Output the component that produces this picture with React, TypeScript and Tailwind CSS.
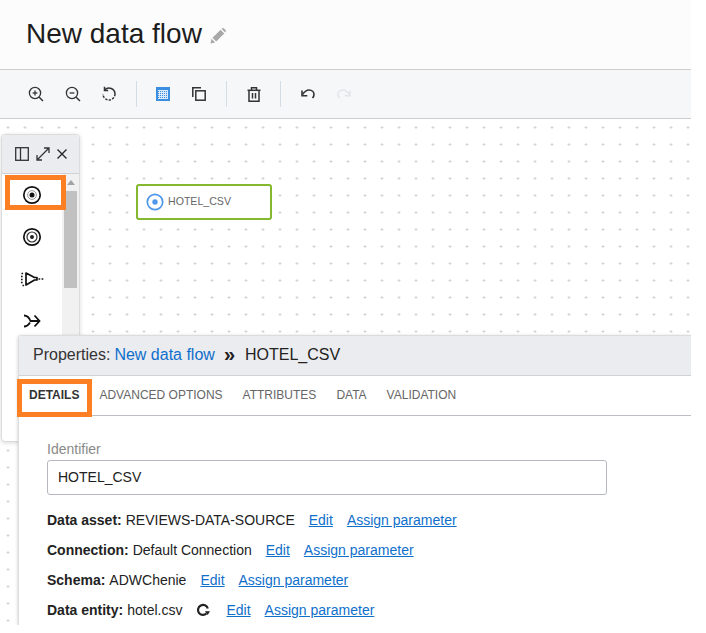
import React from "react";

const font = "font-['Liberation_Sans',Arial,sans-serif]";

const Sep = () => <div className="w-px h-[26px] bg-[#d3dde6] mx-[9px]" />;

const ToolBtn = ({ children }: { children: React.ReactNode }) => (
	<div className="w-9 h-9 flex items-center justify-center">{children}</div>
);

const ZoomIcon = ({ plus }: { plus?: boolean }) => (
	<svg width="16" height="16" viewBox="0 0 16 16" fill="none" stroke="#333" strokeWidth="1.3">
		<circle cx="7" cy="7" r="5.6" />
		<path d="M11.2 11.2L15 15" strokeWidth="1.5" />
		<path d="M4.6 7h4.8" />
		{plus && <path d="M7 4.6v4.8" />}
	</svg>
);

const SourceIcon = () => (
	<svg width="20" height="20" viewBox="0 0 20 20" fill="none">
		<circle cx="10" cy="10" r="8.2" stroke="#111" strokeWidth="1.7" />
		<circle cx="10" cy="10" r="4.4" stroke="#999" strokeWidth="1" />
		<circle cx="10" cy="10" r="2.5" fill="#111" />
	</svg>
);

const TargetIcon = () => (
	<svg width="20" height="20" viewBox="0 0 20 20" fill="none">
		<circle cx="10" cy="10" r="8.2" stroke="#111" strokeWidth="1.7" />
		<circle cx="10" cy="10" r="5" stroke="#333" strokeWidth="1.2" />
		<circle cx="10" cy="10" r="2" fill="#222" />
	</svg>
);

const FilterIcon = () => (
	<svg width="24" height="16" viewBox="0 0 24 16" fill="none" stroke="#111">
		<path d="M6 2l8.500 4.500h2.500v2.500h-2.500L6 14z" strokeWidth="1.700" strokeLinejoin="round" />
		<path d="M1.500 2.500h2M1 5.500h2M1 8.500h2M1 11.500h2M2.500 14.500h2" strokeWidth="1.600" strokeDasharray="1.600 0.800" />
		<path d="M18.500 8h5" strokeWidth="1.700" strokeDasharray="1.700 1.400" />
	</svg>
);

const JoinIcon = () => (
	<svg width="18" height="14" viewBox="0 0 18 14" fill="none" stroke="#111" strokeWidth="1.800">
		<path d="M1 1.500c3 0 5 1.500 6.500 5.500H16" />
		<path d="M1 12.500c2.500 0 4.500-1.500 6-4" />
		<path d="M11.500 1.500L16.500 7l-5 5.500" />
	</svg>
);

const Row = ({ label, value, refresh }: { label: string; value: string; refresh?: boolean }) => (
	<div className="h-[30px] flex items-center text-sm text-[#222]">
		<span className="font-bold mr-1">{label}</span>
		<span>{value}</span>
		{refresh && (
			<svg className="ml-[14px] mr-[2px]" width="14" height="14" viewBox="0 0 14 14" fill="none">
				<path d="M11.800 5.500A5 5 0 1 0 10.500 10.500" stroke="#222" strokeWidth="2.200" />
				<path d="M8.800 8.300h5.200l-2.300 3.700z" fill="#222" />
			</svg>
		)}
		<a className="ml-[14px] text-[#0f6fcb] underline">Edit</a>
		<a className="ml-[14px] text-[#0f6fcb] underline">Assign parameter</a>
	</div>
);

export default function App() {
	return (
		<div className={`${font} w-[706px] h-[633px] bg-white overflow-hidden`}>
			<div className="w-[691px] h-[625px] flex flex-col overflow-hidden">
				<header className="h-[70px] shrink-0 bg-[#fcfcfc] border-b border-[#cdcdcd] flex items-center pl-[26px] pb-[2px]">
					<h1 className="text-[28px] text-[#1d1d1d] leading-none">New data flow</h1>
					<svg className="ml-[8px] mt-[4px]" width="16" height="16" viewBox="0 0 16 16" fill="#a9a9a9">
						<path d="M0.500 15.500l1-4.700 3.700 3.700zM2.500 9.800L10.600 1.700l3.700 3.700-8.100 8.100zM11.500 0.800l1-0.600c0.500-0.300 1-0.200 1.400 0.200l1.700 1.700c0.400 0.400 0.400 1 0 1.400l-0.500 1z" />
					</svg>
				</header>

				<div className="h-[49px] shrink-0 bg-[#f6f7f9] border-b border-[#cdcdcd] flex items-center pl-[18px]">
					<ToolBtn>
						<ZoomIcon plus />
					</ToolBtn>
					<div className="ml-px">
						<ToolBtn>
							<ZoomIcon />
						</ToolBtn>
					</div>
					<ToolBtn>
						<svg width="16" height="16" viewBox="0 0 16 16" fill="none" stroke="#333" strokeWidth="1.500">
							<path d="M3.800 3.800A6 6 0 0 1 14 8" />
							<path d="M14 8A6 6 0 0 1 2 8" strokeDasharray="2.300 1.300" />
							<path d="M3.500 0.800v3.700h3.700" />
						</svg>
					</ToolBtn>
					<div className="-mr-px">
						<Sep />
					</div>
					<ToolBtn>
						<svg width="14" height="14" viewBox="0 0 14 14">
							<rect width="14" height="14" fill="#3c8fe0" />
							<path
								d="M2 3.500h10M2 5.500h10M2 7.500h10M2 9.500h10M2 11.500h10M3.500 3v9M5.500 3v9M7.500 3v9M9.500 3v9M11.500 3v9"
								stroke="#dcebfa"
								strokeWidth="1"
								fill="none"
							/>
						</svg>
					</ToolBtn>
					<ToolBtn>
						<svg width="14" height="14" viewBox="0 0 14 14" fill="none" stroke="#333" strokeWidth="1.500">
							<path d="M9 0.800H0.800V10" />
							<rect x="3.800" y="3.800" width="9.400" height="9.400" />
						</svg>
					</ToolBtn>
					<Sep />
					<ToolBtn>
						<svg width="14" height="15" viewBox="0 0 14 15" fill="none" stroke="#333" strokeWidth="1.500">
							<path d="M0.500 3.300h13" />
							<path d="M4.500 3V0.800h5V3" />
							<path d="M2 3.500v10.700h10V3.500" />
							<path d="M5.500 6v5.500M8.500 6v5.500" />
						</svg>
					</ToolBtn>
					<div className="-ml-px">
						<Sep />
					</div>
					<ToolBtn>
						<svg width="14" height="11" viewBox="0 0 14 11" fill="none" stroke="#333" strokeWidth="1.600">
							<path d="M1.500 5.500C4 2 6 1 8 1c3 0 5 2 5 4.500 0 1.500-0.500 2.500-1.500 3.500" />
							<path d="M1 1.500v5.300h5.300" />
						</svg>
					</ToolBtn>
					<ToolBtn>
						<svg width="14" height="11" viewBox="0 0 14 11" fill="none" stroke="#e3e5e8" strokeWidth="1.500">
							<path d="M12.500 5.500C10 2 8 1 6 1 3 1 1 3 1 5.500 1 7 1.500 8 2.500 9" />
							<path d="M13 1.500v5.300H7.700" />
						</svg>
					</ToolBtn>
				</div>

				<div className="relative flex-1 bg-white bg-[radial-gradient(circle,#d4d4d4_1px,transparent_1.2px)] bg-[size:17px_17px] bg-[position:-0.5px_0px]">
					{/* node on the canvas */}
					<div className="absolute left-[136px] top-[65px] w-[136px] h-[36px] bg-white border-2 border-[#84b82e] rounded-[3px] flex items-center pl-[8px]">
						<svg width="18" height="18" viewBox="0 0 18 18" fill="none">
							<circle cx="9" cy="9" r="7.700" stroke="#4f97e8" strokeWidth="1.700" />
							<circle cx="9" cy="9" r="2.700" fill="#4f97e8" />
						</svg>
						<span className="ml-[4px] text-[10.6px] text-[#666]">HOTEL_CSV</span>
					</div>

					{/* floating palette */}
					<div className="absolute left-[1px] top-[15px] w-[79px] h-[308px] bg-white border border-[#dcdcdc] rounded-[4px] shadow-[0_1px_4px_rgba(0,0,0,0.15)] overflow-hidden">
						<div className="h-[39px] bg-[#ebecf0] border-b border-[#cfd1d6] flex items-center pl-[13px] gap-[7px]">
							<svg width="14" height="14" viewBox="0 0 14 14" fill="none" stroke="#333" strokeWidth="1.300">
								<rect x="0.700" y="0.700" width="12.600" height="12.600" />
								<path d="M5.500 1v12" />
							</svg>
							<svg width="14" height="14" viewBox="0 0 14 14" fill="none" stroke="#333" strokeWidth="1.300">
								<path d="M1 13L13 1M8 1h5v5M1 8v5h5" />
							</svg>
							<svg width="10" height="10" viewBox="0 0 10 10" fill="none" stroke="#222" strokeWidth="1.300">
								<path d="M0.500 0.500l9 9M9.500 0.500l-9 9" />
							</svg>
						</div>
						<div className="flex h-[268px]">
							<div className="w-[61px] flex flex-col items-center pr-[1px]">
								<div className="h-[42px] flex items-center justify-center">
									<SourceIcon />
								</div>
								<div className="h-[42px] flex items-center justify-center">
									<TargetIcon />
								</div>
								<div className="h-[42px] flex items-center justify-center">
									<FilterIcon />
								</div>
								<div className="h-[42px] flex items-center justify-center">
									<JoinIcon />
								</div>
							</div>
							<div className="w-[17px] bg-[#f1f1f1] flex flex-col items-center pt-[6px]">
								<div className="w-0 h-0 border-x-[4px] border-x-transparent border-b-[5px] border-b-[#a3a3a3]" />
								<div className="mt-[6px] w-[13px] h-[97px] bg-[#c1c1c1]" />
							</div>
						</div>
					</div>

					{/* annotation on the palette item */}
					<div className="absolute left-[5px] top-[56px] w-[61px] h-[35px] border-[5px] border-[#fd7f24]" />

					{/* properties panel */}
					<div className="absolute left-[18px] top-[216px] right-0 bottom-0 bg-white rounded-tl-[4px] border-l border-t border-[#dcdcdc] shadow-[-1px_0_3px_rgba(0,0,0,0.12)]">
						<div className="h-[40px] bg-[#ebecf0] border-b border-[#cfd1d6] flex items-center pl-[14px] pb-[2px] text-base text-[#333]">
							<span>Properties:</span>
							<a className="ml-[4px] text-[#0f6fcb]">New data flow</a>
							<span className="ml-[9px] mr-[10px] -mt-[2px] text-[20px] leading-none font-bold text-[#222]">»</span>
							<span className="text-[#222]">HOTEL_CSV</span>
						</div>
						<div className="relative h-[40px] border-b border-[#bcbfc5] flex items-center pl-[10px] pb-[2px] gap-[20px] text-xs text-[#666]">
							<span className="font-bold text-[#333]">DETAILS</span>
							<span>ADVANCED OPTIONS</span>
							<span>ATTRIBUTES</span>
							<span>DATA</span>
							<span>VALIDATION</span>
							<div className="absolute left-[-2px] top-[3px] w-[75px] h-[38px] border-[5px] border-[#fd7f24]" />
						</div>
						<div className="pl-[28px] pt-[25px]">
							<label className="block text-sm leading-4 text-[#8a8a8a]">Identifier</label>
							<div className="mt-[3px] w-[560px] h-[35px] border border-[#b5b9bf] rounded-[3px] flex items-center pl-[10px] pb-[2px] text-sm text-[#222]">
								HOTEL_CSV
							</div>
							<div className="mt-[10px]">
								<Row label="Data asset:" value="REVIEWS-DATA-SOURCE" />
								<Row label="Connection:" value="Default Connection" />
								<Row label="Schema:" value="ADWChenie" />
								<Row label="Data entity:" value="hotel.csv" refresh />
							</div>
						</div>
					</div>
				</div>
			</div>
		</div>
	);
}
